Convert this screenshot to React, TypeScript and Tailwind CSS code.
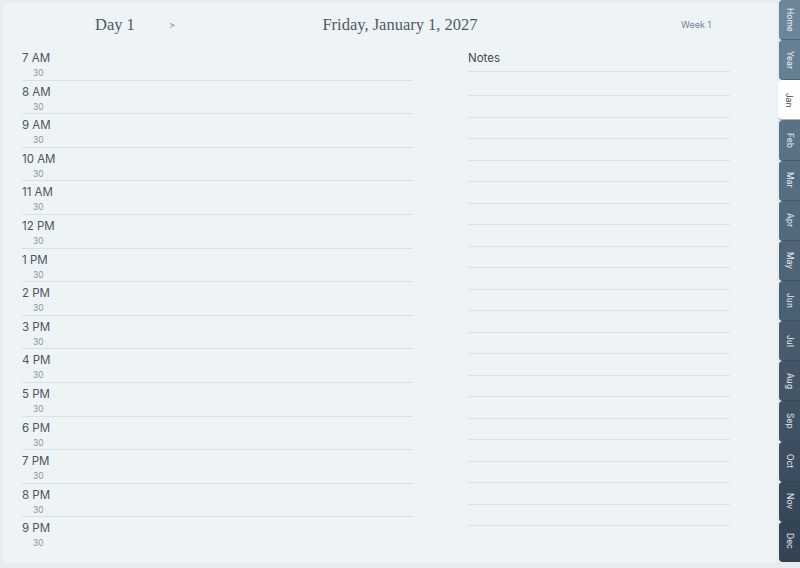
import React from "react";

const hours = ["7 AM", "8 AM", "9 AM", "10 AM", "11 AM", "12 PM", "1 PM", "2 PM", "3 PM", "4 PM", "5 PM", "6 PM", "7 PM", "8 PM", "9 PM"];

const tabs: { label: string; bg: string; active?: boolean }[] = [
  { label: "Home", bg: "bg-[#6c8599]" },
  { label: "Year", bg: "bg-[#668093]" },
  { label: "Jan", bg: "bg-white", active: true },
  { label: "Feb", bg: "bg-[#5b7285]" },
  { label: "Mar", bg: "bg-[#576e81]" },
  { label: "Apr", bg: "bg-[#53697c]" },
  { label: "May", bg: "bg-[#4f6477]" },
  { label: "Jun", bg: "bg-[#4b6072]" },
  { label: "Jul", bg: "bg-[#475b6d]" },
  { label: "Aug", bg: "bg-[#435668]" },
  { label: "Sep", bg: "bg-[#3f5263]" },
  { label: "Oct", bg: "bg-[#3b4d5e]" },
  { label: "Nov", bg: "bg-[#374959]" },
  { label: "Dec", bg: "bg-[#334454]" },
];

const serif = { fontFamily: '"Liberation Serif", "DejaVu Serif", serif' };

export default function App() {
  return (
    <div className="w-[800px] h-[568px] flex bg-[#e7ecf0] overflow-hidden" style={{ fontFamily: 'Inter, "Noto Sans", sans-serif' }}>
      <div className="w-[779px] h-full p-[3px] pr-[2px] pb-[5px]">
        <div className="w-full h-full bg-[#eef3f6] rounded-sm flex flex-col">
          <header className="h-[44px] flex items-center shrink-0">
            <div className="w-[297px] flex items-center">
              <span className="ml-[92px] w-[74px] text-[16.5px] text-[#4f5a66]" style={serif}>Day 1</span>
              <span className="text-[9px] text-[#7a8896]">&gt;</span>
            </div>
            <div className="w-[200px] text-center text-[16.5px] text-[#4f5a66]" style={serif}>
              Friday, January 1, 2027
            </div>
            <div className="pl-[181px] text-[9px] text-[#6f8397]">Week 1</div>
          </header>

          <div className="flex flex-1">
            <div className="ml-[19px] w-[391px] flex flex-col">
              {hours.map((h, i) => (
                <div
                  key={h}
                  className={`h-[33.6px] flex flex-col ${i < hours.length - 1 ? "border-b border-[#d9e0e6]" : ""}`}
                >
                  <div className="pt-[3px] text-[11.5px] leading-[16px] text-[#4a5561]">{h}</div>
                  <div className="mt-[2px] pl-[11px] text-[8.5px] leading-[10px] text-[#8c97a2]">30</div>
                </div>
              ))}
            </div>

            <div className="ml-[55px] w-[262px] flex flex-col">
              <div className="h-[25px] border-b border-[#d9e0e6] pt-[3px] text-[11.5px] text-[#3f4954] leading-[16px]">
                Notes
              </div>
              <div className="h-[24px] border-b border-[#d9e0e6]" />
              {Array.from({ length: 20 }).map((_, i) => (
                <div key={i} className="h-[21.5px] border-b border-[#d9e0e6]" />
              ))}
            </div>
          </div>
        </div>
      </div>

      <nav className="w-[21px] flex flex-col">
        {tabs.map((t) => (
          <div
            key={t.label}
            className={`h-[40.15px] flex items-center justify-center rounded-l-[4px] border-b border-[#2c3a47]/40 ${t.bg} ${
              t.active ? "-ml-[1px] text-[#3d4854]" : "text-white/90"
            }`}
          >
            <span className="text-[8.5px] leading-none" style={{ writingMode: "vertical-rl" }}>
              {t.label}
            </span>
          </div>
        ))}
      </nav>
    </div>
  );
}
